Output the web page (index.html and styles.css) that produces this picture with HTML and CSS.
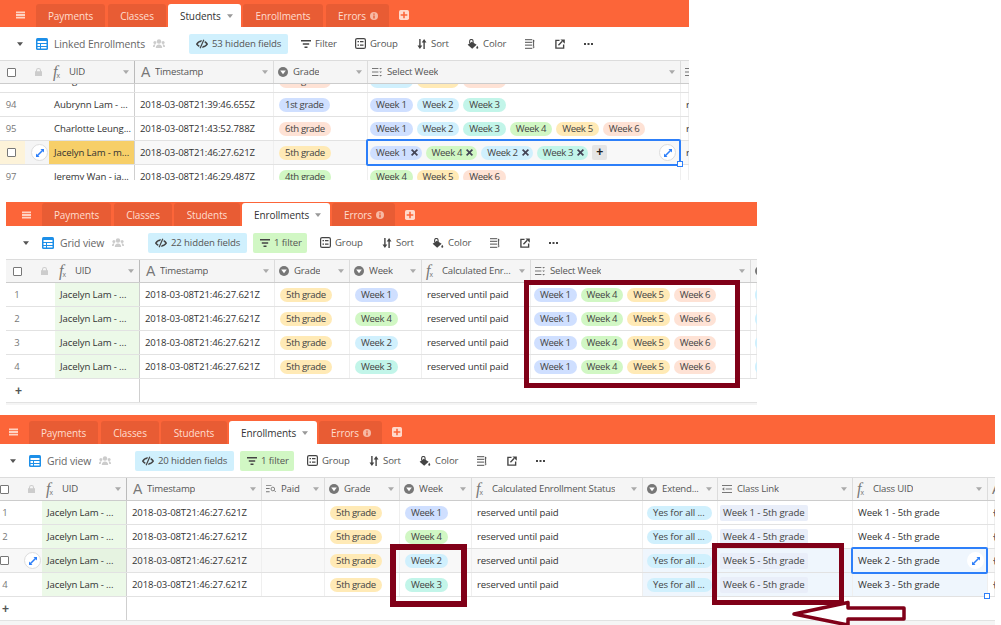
FILE: index.html
```html
<!DOCTYPE html>
<html lang="en">
<head>
<meta charset="utf-8">
<title>Enrollments</title>
<link rel="stylesheet" href="styles.css">
</head>
<body>
<svg class="defs" width="0" height="0">
  <symbol id="i-menu" viewBox="0 0 10 8"><path d="M0 0h10v2H0zM0 3h10v2H0zM0 6h10v2H0z"/></symbol>
  <symbol id="i-caret" viewBox="0 0 8 5"><path d="M0 0h8L4 5z"/></symbol>
  <symbol id="i-grid" viewBox="0 0 12 12"><rect width="12" height="12" rx="1.500" fill="#1d8fe8"/><path d="M1.500 3h9v2h-9zM1.500 6h2.500v2H1.500zM5 6h5.500v2H5zM1.500 9h2.500v1.500H1.500zM5 9h5.500v1.500H5z" fill="#fff"/></symbol>
  <symbol id="i-people" viewBox="0 0 12 9"><circle cx="6" cy="2.500" r="2.200"/><circle cx="1.900" cy="3.400" r="1.500"/><circle cx="10.100" cy="3.400" r="1.500"/><path d="M2.800 9c0-2.400 1.200-3.600 3.200-3.600S9.200 6.600 9.200 9zM0 8c0-1.600.6-2.700 2-2.700l.6.2C1.900 6.300 1.800 7 1.800 8zM12 8c0-1.600-.6-2.700-2-2.700l-.6.2c.7.800.8 1.500.8 2.500z"/></symbol>
  <symbol id="i-eye" viewBox="0 0 13 10"><path d="M.8 5.200C2 3 3.800 1.800 6.500 1.800s4.500 1.200 5.700 3.400c-1.200 2-3 3-5.700 3S2 7.200.8 5.200z" fill="none" stroke="currentColor" stroke-width="1.500"/><path d="M8.500.5 4.500 9.500" stroke="#d0f0fd" stroke-width="3.200"/><path d="M8.500.5 4.500 9.500" stroke="currentColor" stroke-width="1.300"/></symbol>
  <symbol id="i-filter" viewBox="0 0 10 8"><path d="M0 0h10v1.600H0zM1.800 3.200h6.400v1.600H1.800zM3.500 6.400h3V8h-3z"/></symbol>
  <symbol id="i-group" viewBox="0 0 11 11"><rect x=".6" y=".6" width="9.800" height="9.800" rx="1.500" fill="none" stroke="currentColor" stroke-width="1.200"/><path d="M2.500 3h1.500v1.200H2.500zM5 3h3.500v1.200H5zM2.500 6.500h1.500v1.200H2.500zM5 6.500h3.500v1.200H5z"/></symbol>
  <symbol id="i-sort" viewBox="0 0 10 10"><path d="M2.200 0h1.400v6.500h1.700L2.900 10 .5 6.500h1.700zM6.400 10h1.400V3.500h1.700L7.100 0 4.700 3.500h1.700z"/></symbol>
  <symbol id="i-bucket" viewBox="0 0 13 11"><path d="M5.200 3 10.500 6.400 5.600 10.600.6 6.400z"/><path d="M2.800 4.800V2.400a1.900 1.900 0 0 1 3.800 0v2" fill="none" stroke="currentColor" stroke-width="1.200"/><path d="M11.200 7.300c.6 1 1.100 1.600 1.100 2.200a1.100 1.100 0 0 1-2.200 0c0-.6.500-1.200 1.100-2.200z"/></symbol>
  <symbol id="i-height" viewBox="0 0 11 11"><path d="M0 0h8v1.500H0zM0 3h8v1.500H0zM0 6h8v1.500H0zM0 9.500h8V11H0z" opacity=".75"/><path d="M9 2h1v7H9zM8.300 2.500 9.500.5l1.200 2zM8.300 8.500l1.200 2 1.200-2z"/></symbol>
  <symbol id="i-share" viewBox="0 0 11 11"><path d="M5 1.500H1V10h8.500V6" fill="none" stroke="currentColor" stroke-width="1.500"/><path d="M3.800 6.800 8 2.500" stroke="currentColor" stroke-width="1.500"/><path d="M6 .5h4.800v4.800z"/></symbol>
  <symbol id="i-dots" viewBox="0 0 9 2"><path d="M0 0h2v2H0zM3.500 0h2v2h-2zM7 0h2v2H7z"/></symbol>
  <symbol id="i-lock" viewBox="0 0 7 8"><path d="M1 3.200V2.400a2.500 2.400 0 0 1 5 0v.8h1V8H0V3.200zM2 3.200h3V2.400a1.500 1.400 0 0 0-3 0z"/></symbol>
  <symbol id="i-option" viewBox="0 0 10 10"><circle cx="5" cy="5" r="5"/><path d="M2.200 3.400h5.600L5 7.300z" fill="#fff"/></symbol>
  <symbol id="i-multi" viewBox="0 0 11 10"><path d="M0 .5h7v1.200H0zM0 4.400h7v1.200H0zM0 8.300h7v1.200H0zM8 .5h3L9.500 2.200zM8 4.400h3L9.500 6.100zM8 8.300h3L9.500 10z"/></symbol>
  <symbol id="i-link" viewBox="0 0 11 10"><path d="M0 .5h11v1.200H0zM4 4.400h7v1.200H4zM0 8.300h11v1.200H0zM0 5l2.500-1.800v3.600z"/></symbol>
  <symbol id="i-lookup" viewBox="0 0 11 10"><path d="M0 .5h6v1H0zM0 4h4v1H0zM0 7.500h4v1H0z"/><circle cx="7.500" cy="5" r="2" fill="none" stroke="currentColor"/><path d="m9 6.500 1.800 1.800" stroke="currentColor"/></symbol>
  <symbol id="i-expand" viewBox="0 0 8 8"><path d="M4.500 0H8v3.500L6.800 2.300 2.300 6.800 3.500 8H0V4.500l1.200 1.200 4.500-4.500z"/></symbol>
  <symbol id="i-info" viewBox="0 0 8 8"><circle cx="4" cy="4" r="4"/><path d="M3.300 1.500h1.400v1.200H3.300zM3.300 3.400h1.400v3.100H3.300z" fill="#e85c34"/></symbol>
  <symbol id="i-plus" viewBox="0 0 9 9"><rect width="9" height="9" rx="1.500" fill="#ffd9cb"/><path d="M3.800 1.500h1.400v2.300h2.300v1.400H5.200v2.300H3.800V5.200H1.500V3.800h2.300z" fill="#fc6539"/></symbol>
  <symbol id="i-x" viewBox="0 0 7 7"><path d="M1.200 0 3.500 2.300 5.800 0 7 1.200 4.700 3.500 7 5.800 5.800 7 3.500 4.700 1.200 7 0 5.800 2.300 3.500 0 1.200z"/></symbol>
</svg>

<section class="panel p1">
  <nav class="tabbar">
    <svg class="menu"><use href="#i-menu"/></svg>
    <span class="tab w-pay">Payments</span><span class="tab w-cla">Classes</span>
    <span class="tab on w-stu1">Students <svg class="tcaret"><use href="#i-caret"/></svg></span>
    <span class="tab w-enr1">Enrollments</span>
    <span class="tab w-err">Errors <svg class="info"><use href="#i-info"/></svg></span>
    <svg class="addtab"><use href="#i-plus"/></svg>
  </nav>
  <div class="toolbar">
    <svg class="ti-caret"><use href="#i-caret"/></svg>
    <svg class="ti-grid"><use href="#i-grid"/></svg>
    <span class="viewname">Linked Enrollments</span>
    <svg class="ti-people"><use href="#i-people"/></svg>
    <span class="btn hidden"><svg class="ti-eye"><use href="#i-eye"/></svg>53 hidden fields</span>
    <span class="tool t-filter"><svg class="ti-filter"><use href="#i-filter"/></svg>Filter</span>
    <span class="tool t-group"><svg class="ti-group"><use href="#i-group"/></svg>Group</span>
    <span class="tool t-sort"><svg class="ti-sort"><use href="#i-sort"/></svg>Sort</span>
    <span class="tool t-color"><svg class="ti-bucket"><use href="#i-bucket"/></svg>Color</span>
    <svg class="ti-sm t-height"><use href="#i-height"/></svg>
    <svg class="ti-sm t-share"><use href="#i-share"/></svg>
    <svg class="ti-dots t-dots"><use href="#i-dots"/></svg>
  </div>
  <div class="row head">
    <div class="c first"><span class="cb"></span><svg class="lock"><use href="#i-lock"/></svg></div>
    <div class="c frozen"><span class="fx"><i>f</i><sub>x</sub></span><span class="nm">UID</span><svg class="hc"><use href="#i-caret"/></svg></div>
    <div class="c"><span class="ta">A</span><span class="nm">Timestamp</span><svg class="hc"><use href="#i-caret"/></svg></div>
    <div class="c"><svg class="hi"><use href="#i-option"/></svg><span class="nm">Grade</span><svg class="hc"><use href="#i-caret"/></svg></div>
    <div class="c"><svg class="hi"><use href="#i-multi"/></svg><span class="nm">Select Week</span><svg class="hc"><use href="#i-caret"/></svg></div>
    <div class="c"><svg class="hi"><use href="#i-multi"/></svg></div>
  </div>
  <div class="clip">
    <div class="row shift">
      <div class="c first"></div><div class="c frozen">Morgan Lam - ...</div><div class="c">2018-03-08T21:38:12.204Z</div>
      <div class="c"><span class="p salmon">6th grade</span></div>
      <div class="c multi"><span class="p lblue">Week 2</span><span class="p yellow">Week 5</span><span class="p salmon">Week 6</span></div><div class="c"></div>
    </div>
    <div class="row">
      <div class="c first"><span class="n">94</span></div><div class="c frozen">Aubrynn Lam - ...</div><div class="c">2018-03-08T21:39:46.655Z</div>
      <div class="c"><span class="p blue">1st grade</span></div>
      <div class="c multi"><span class="p blue">Week 1</span><span class="p lblue">Week 2</span><span class="p teal">Week 3</span></div><div class="c">r</div>
    </div>
    <div class="row">
      <div class="c first"><span class="n">95</span></div><div class="c frozen">Charlotte Leung...</div><div class="c">2018-03-08T21:43:52.788Z</div>
      <div class="c"><span class="p salmon">6th grade</span></div>
      <div class="c multi"><span class="p blue">Week 1</span><span class="p lblue">Week 2</span><span class="p teal">Week 3</span><span class="p green">Week 4</span><span class="p yellow">Week 5</span><span class="p salmon">Week 6</span></div><div class="c">r</div>
    </div>
    <div class="row hover">
      <div class="c first cream"><span class="cb"></span><span class="circle"><svg><use href="#i-expand"/></svg></span></div><div class="c frozen gold">Jacelyn Lam - m...</div><div class="c">2018-03-08T21:46:27.621Z</div>
      <div class="c"><span class="p yellow">5th grade</span></div>
      <div class="c multi sel">
        <span class="p blue xp">Week 1<svg class="x"><use href="#i-x"/></svg></span><span class="p green xp">Week 4<svg class="x"><use href="#i-x"/></svg></span><span class="p lblue xp">Week 2<svg class="x"><use href="#i-x"/></svg></span><span class="p teal xp">Week 3<svg class="x"><use href="#i-x"/></svg></span><span class="addp">+</span>
        <span class="selbox"></span><span class="handle"></span><span class="circle right"><svg><use href="#i-expand"/></svg></span>
      </div><div class="c">r</div>
    </div>
    <div class="row">
      <div class="c first"><span class="n">97</span></div><div class="c frozen">Jeremy Wan - ia...</div><div class="c">2018-03-08T21:46:29.487Z</div>
      <div class="c"><span class="p green">4th grade</span></div>
      <div class="c multi"><span class="p green">Week 4</span><span class="p yellow">Week 5</span><span class="p salmon">Week 6</span></div><div class="c"></div>
    </div>
  </div>
</section>

<section class="panel p2">
  <nav class="tabbar">
    <svg class="menu"><use href="#i-menu"/></svg>
    <span class="tab w-pay">Payments</span><span class="tab w-cla">Classes</span><span class="tab w-stu">Students</span>
    <span class="tab on w-enr">Enrollments <svg class="tcaret"><use href="#i-caret"/></svg></span>
    <span class="tab w-err">Errors <svg class="info"><use href="#i-info"/></svg></span>
    <svg class="addtab"><use href="#i-plus"/></svg>
  </nav>
  <div class="toolbar">
    <svg class="ti-caret"><use href="#i-caret"/></svg>
    <svg class="ti-grid"><use href="#i-grid"/></svg>
    <span class="viewname">Grid view</span>
    <svg class="ti-people"><use href="#i-people"/></svg>
    <span class="btn hidden"><svg class="ti-eye"><use href="#i-eye"/></svg>22 hidden fields</span>
    <span class="btn filt"><svg class="ti-filter"><use href="#i-filter"/></svg>1 filter</span>
    <span class="tool t-group"><svg class="ti-group"><use href="#i-group"/></svg>Group</span>
    <span class="tool t-sort"><svg class="ti-sort"><use href="#i-sort"/></svg>Sort</span>
    <span class="tool t-color"><svg class="ti-bucket"><use href="#i-bucket"/></svg>Color</span>
    <svg class="ti-sm t-height"><use href="#i-height"/></svg>
    <svg class="ti-sm t-share"><use href="#i-share"/></svg>
    <svg class="ti-dots t-dots"><use href="#i-dots"/></svg>
  </div>
  <div class="row head">
    <div class="c first"><span class="cb"></span><svg class="lock"><use href="#i-lock"/></svg></div>
    <div class="c frozen"><span class="fx"><i>f</i><sub>x</sub></span><span class="nm">UID</span><svg class="hc"><use href="#i-caret"/></svg></div>
    <div class="c"><span class="ta">A</span><span class="nm">Timestamp</span><svg class="hc"><use href="#i-caret"/></svg></div>
    <div class="c"><svg class="hi"><use href="#i-option"/></svg><span class="nm">Grade</span><svg class="hc"><use href="#i-caret"/></svg></div>
    <div class="c"><svg class="hi"><use href="#i-option"/></svg><span class="nm">Week</span><svg class="hc"><use href="#i-caret"/></svg></div>
    <div class="c"><span class="fx"><i>f</i><sub>x</sub></span><span class="nm">Calculated Enr...</span><svg class="hc"><use href="#i-caret"/></svg></div>
    <div class="c"><svg class="hi"><use href="#i-multi"/></svg><span class="nm">Select Week</span><svg class="hc"><use href="#i-caret"/></svg></div>
    <div class="c"><svg class="hi"><use href="#i-option"/></svg></div>
  </div>
  <div class="row">
    <div class="c first"><span class="n">1</span></div><div class="c frozen mint">Jacelyn Lam - ...</div><div class="c">2018-03-08T21:46:27.621Z</div>
    <div class="c"><span class="p yellow">5th grade</span></div><div class="c"><span class="p blue">Week 1</span></div><div class="c">reserved until paid</div>
    <div class="c multi"><span class="p blue">Week 1</span><span class="p green">Week 4</span><span class="p yellow">Week 5</span><span class="p salmon">Week 6</span></div><div class="c tight"><span class="p lblue edge"></span></div>
  </div>
  <div class="row">
    <div class="c first"><span class="n">2</span></div><div class="c frozen mint">Jacelyn Lam - ...</div><div class="c">2018-03-08T21:46:27.621Z</div>
    <div class="c"><span class="p yellow">5th grade</span></div><div class="c"><span class="p green">Week 4</span></div><div class="c">reserved until paid</div>
    <div class="c multi"><span class="p blue">Week 1</span><span class="p green">Week 4</span><span class="p yellow">Week 5</span><span class="p salmon">Week 6</span></div><div class="c tight"><span class="p lblue edge"></span></div>
  </div>
  <div class="row">
    <div class="c first"><span class="n">3</span></div><div class="c frozen mint">Jacelyn Lam - ...</div><div class="c">2018-03-08T21:46:27.621Z</div>
    <div class="c"><span class="p yellow">5th grade</span></div><div class="c"><span class="p lblue">Week 2</span></div><div class="c">reserved until paid</div>
    <div class="c multi"><span class="p blue">Week 1</span><span class="p green">Week 4</span><span class="p yellow">Week 5</span><span class="p salmon">Week 6</span></div><div class="c tight"><span class="p lblue edge"></span></div>
  </div>
  <div class="row">
    <div class="c first"><span class="n">4</span></div><div class="c frozen mint">Jacelyn Lam - ...</div><div class="c">2018-03-08T21:46:27.621Z</div>
    <div class="c"><span class="p yellow">5th grade</span></div><div class="c"><span class="p teal">Week 3</span></div><div class="c">reserved until paid</div>
    <div class="c multi"><span class="p blue">Week 1</span><span class="p green">Week 4</span><span class="p yellow">Week 5</span><span class="p salmon">Week 6</span></div><div class="c tight"><span class="p lblue edge"></span></div>
  </div>
  <div class="addrow"><span class="plus">+</span></div>
  <div class="foot"></div>
  <div class="redbox r1"></div>
</section>

<section class="panel p3">
  <nav class="tabbar">
    <svg class="menu"><use href="#i-menu"/></svg>
    <span class="tab w-pay">Payments</span><span class="tab w-cla">Classes</span><span class="tab w-stu">Students</span>
    <span class="tab on w-enr">Enrollments <svg class="tcaret"><use href="#i-caret"/></svg></span>
    <span class="tab w-err">Errors <svg class="info"><use href="#i-info"/></svg></span>
    <svg class="addtab"><use href="#i-plus"/></svg>
  </nav>
  <div class="toolbar">
    <svg class="ti-caret"><use href="#i-caret"/></svg>
    <svg class="ti-grid"><use href="#i-grid"/></svg>
    <span class="viewname">Grid view</span>
    <svg class="ti-people"><use href="#i-people"/></svg>
    <span class="btn hidden"><svg class="ti-eye"><use href="#i-eye"/></svg>20 hidden fields</span>
    <span class="btn filt"><svg class="ti-filter"><use href="#i-filter"/></svg>1 filter</span>
    <span class="tool t-group"><svg class="ti-group"><use href="#i-group"/></svg>Group</span>
    <span class="tool t-sort"><svg class="ti-sort"><use href="#i-sort"/></svg>Sort</span>
    <span class="tool t-color"><svg class="ti-bucket"><use href="#i-bucket"/></svg>Color</span>
    <svg class="ti-sm t-height"><use href="#i-height"/></svg>
    <svg class="ti-sm t-share"><use href="#i-share"/></svg>
    <svg class="ti-dots t-dots"><use href="#i-dots"/></svg>
  </div>
  <div class="row head">
    <div class="c first"><span class="cb"></span><svg class="lock"><use href="#i-lock"/></svg></div>
    <div class="c frozen"><span class="fx"><i>f</i><sub>x</sub></span><span class="nm">UID</span><svg class="hc"><use href="#i-caret"/></svg></div>
    <div class="c"><span class="ta">A</span><span class="nm">Timestamp</span><svg class="hc"><use href="#i-caret"/></svg></div>
    <div class="c"><svg class="hi"><use href="#i-lookup"/></svg><span class="nm">Paid</span><svg class="hc"><use href="#i-caret"/></svg></div>
    <div class="c"><svg class="hi"><use href="#i-option"/></svg><span class="nm">Grade</span><svg class="hc"><use href="#i-caret"/></svg></div>
    <div class="c"><svg class="hi"><use href="#i-option"/></svg><span class="nm">Week</span><svg class="hc"><use href="#i-caret"/></svg></div>
    <div class="c"><span class="fx"><i>f</i><sub>x</sub></span><span class="nm">Calculated Enrollment Status</span><svg class="hc"><use href="#i-caret"/></svg></div>
    <div class="c"><svg class="hi"><use href="#i-option"/></svg><span class="nm">Extend...</span><svg class="hc"><use href="#i-caret"/></svg></div>
    <div class="c"><svg class="hi"><use href="#i-link"/></svg><span class="nm">Class Link</span><svg class="hc"><use href="#i-caret"/></svg></div>
    <div class="c"><span class="fx"><i>f</i><sub>x</sub></span><span class="nm">Class UID</span><svg class="hc"><use href="#i-caret"/></svg></div>
    <div class="c"><span class="ta">A</span></div>
  </div>
  <div class="row">
    <div class="c first"><span class="n">1</span></div><div class="c frozen mint">Jacelyn Lam - ...</div><div class="c">2018-03-08T21:46:27.621Z</div><div class="c"></div>
    <div class="c"><span class="p yellow">5th grade</span></div><div class="c"><span class="p blue">Week 1</span></div><div class="c">reserved until paid</div>
    <div class="c tight"><span class="p lblue yes">Yes for all ...</span></div><div class="c rc"><span class="rec">Week 1 - 5th grade</span></div><div class="c">Week 1 - 5th grade</div><div class="c">{</div>
  </div>
  <div class="row">
    <div class="c first"><span class="n">2</span></div><div class="c frozen mint">Jacelyn Lam - ...</div><div class="c">2018-03-08T21:46:27.621Z</div><div class="c"></div>
    <div class="c"><span class="p yellow">5th grade</span></div><div class="c"><span class="p green">Week 4</span></div><div class="c">reserved until paid</div>
    <div class="c tight"><span class="p lblue yes">Yes for all ...</span></div><div class="c rc"><span class="rec">Week 4 - 5th grade</span></div><div class="c">Week 4 - 5th grade</div><div class="c">{</div>
  </div>
  <div class="row hover">
    <div class="c first"><span class="cb"></span><span class="circle"><svg><use href="#i-expand"/></svg></span></div><div class="c frozen mintd">Jacelyn Lam - ...</div><div class="c">2018-03-08T21:46:27.621Z</div><div class="c"></div>
    <div class="c"><span class="p yellow">5th grade</span></div><div class="c"><span class="p lblue">Week 2</span></div><div class="c">reserved until paid</div>
    <div class="c tight range"><span class="p lblue yes">Yes for all ...</span></div><div class="c rc range"><span class="rec">Week 5 - 5th grade</span></div>
    <div class="c sel range">Week 2 - 5th grade<span class="selbox"></span><span class="circle right"><svg><use href="#i-expand"/></svg></span></div><div class="c">{</div>
  </div>
  <div class="row">
    <div class="c first"><span class="n">4</span></div><div class="c frozen mint">Jacelyn Lam - ...</div><div class="c">2018-03-08T21:46:27.621Z</div><div class="c"></div>
    <div class="c"><span class="p yellow">5th grade</span></div><div class="c"><span class="p teal">Week 3</span></div><div class="c">reserved until paid</div>
    <div class="c tight range"><span class="p lblue yes">Yes for all ...</span></div><div class="c rc range"><span class="rec">Week 6 - 5th grade</span></div>
    <div class="c sel range">Week 3 - 5th grade<span class="handle"></span></div><div class="c">{</div>
  </div>
  <div class="addrow"><span class="plus">+</span></div>
  <div class="foot"></div>
  <div class="redbox r2"></div>
  <div class="redbox r3"></div>
  <svg class="arrow" viewBox="0 0 120 26"><path d="M4 13 58 1.500V7h56v11H58v6z"/></svg>
</section>
</body>
</html>
```
FILE: styles.css
```css
* { box-sizing: border-box; }
html, body { margin: 0; padding: 0; background: #fff; height: 625px; overflow: hidden; }
body { font: 9.6px/14px "Open Sans", "Noto Sans", sans-serif; letter-spacing: -.12px; color: #333; }
.defs { position: absolute; }
svg { fill: currentColor; display: block; flex: none; }

.panel { position: relative; overflow: hidden; }
.p1 { width: 689px; height: 180px; }
.p2 { width: 751px; height: 203px; margin: 22px 0 0 6px; }
.p3 { width: 995px; height: 210px; margin-top: 10px; }

/* tab bar */
.tabbar { display: flex; align-items: flex-end; height: 27px; background: #fc6539; padding-left: 16px; }
.p2 .tabbar { height: 24px; }
.p3 .tabbar { height: 29px; padding-left: 9px; }
.menu { width: 9px; height: 8px; color: #ffd3c3; margin: 0 11px 8px 0; }
.p2 .menu { margin-bottom: 7px; }
.tab { height: 23px; display: flex; align-items: center; justify-content: center; margin-right: 2px; background: #e85c34; color: #ffdccf; font-size: 10px; letter-spacing: -.1px; border-radius: 3px 3px 0 0; }
.tab.on { background: #fff; color: #333; justify-content: flex-start; padding-left: 12px; gap: 6px; }
.w-pay { width: 69px; margin-right: 3px; }
.w-cla { width: 58px; }
.w-stu { width: 66px; }
.w-stu1 { width: 73px; }
.w-enr { width: 88px; }
.w-enr1 { width: 80px; margin-right: 3px; }
.w-err { width: 63px; justify-content: flex-start; padding-left: 12px; gap: 4px; }
.tcaret { width: 6px; height: 4px; color: #999; }
.info { width: 8px; height: 8px; color: #f7b9a4; }
.addtab { width: 10px; height: 10px; margin: 0 0 7px 8px; }
.p2 .addtab { margin-bottom: 6px; }

/* toolbar */
.toolbar { display: flex; align-items: center; height: 33px; padding-left: 17px; color: #555; white-space: nowrap; }
.p3 .toolbar { padding-left: 10px; }
.ti-caret { width: 6px; height: 4px; color: #555; margin-right: 13px; }
.ti-grid { width: 12px; height: 12px; margin-right: 6px; }
.viewname { font-size: 10.4px; color: #666; margin-right: 6px; width: 46px; }
.p1 .viewname { width: 93px; }
.ti-people { width: 12px; height: 9px; color: #ccc; margin-right: 24px; }
.btn { display: flex; align-items: center; height: 20px; border-radius: 2px; }
.hidden { width: 99px; background: #d0f0fd; gap: 4px; padding-left: 7px; margin-right: 6px; }
.filt { width: 54px; background: #d1f7c4; gap: 4px; padding-left: 7px; margin-right: 13px; }
.ti-eye { width: 12px; height: 10px; color: #444; }
.ti-filter { width: 10px; height: 8px; color: #444; }
.tool { display: flex; align-items: center; gap: 4px; }
.t-filter { width: 36px; margin: 0 18px 0 7px; }
.t-group { width: 42px; margin-right: 20px; }
.t-sort { width: 32px; margin-right: 18px; }
.t-color { width: 39px; margin-right: 19px; }
.ti-group { width: 11px; height: 11px; color: #444; }
.ti-sort { width: 10px; height: 10px; color: #444; }
.ti-bucket { width: 12px; height: 10px; color: #444; }
.ti-sm { width: 10px; height: 10px; color: #444; }
.t-height { margin-right: 20px; }
.t-share { margin-right: 19px; }
.ti-dots { width: 9px; height: 2px; color: #444; }

/* grid rows */
.row { display: grid; height: 24px; border-bottom: 1px solid #e2e2e2; }
.p1 .row { grid-template-columns: 49px 86px 139px 94px 313px 8px; }
.p2 .row { grid-template-columns: 49px 85px 135px 75px 72px 109px 220px 6px; }
.p3 .row { grid-template-columns: 42px 85px 135px 63px 75px 72px 171px 75px 135px 135px 7px; }
.c { position: relative; display: flex; align-items: center; gap: 4px; padding-left: 5px; border-right: 1px solid #efefef; white-space: nowrap; min-width: 0; color: #333; }
.first { padding: 0; border-right: 0; }
.frozen { border-right: 1px solid #cfcfcf; }
.multi { padding-left: 3px; }
.p1 .multi { padding-left: 2px; }
.tight { padding-left: 4px; }
.rc { padding-left: 2px; }

.head { background: #f5f5f5; border-top: 1px solid #dcdcdc; border-bottom: 1px solid #ccc; letter-spacing: -.2px; }
.head .c { border-right-color: #dcdcdc; padding-left: 4px; padding-right: 5px; color: #555; overflow: hidden; }
.head .frozen { border-right: 1px solid #bbb; }
.head .first { padding: 0 0 0 7px; gap: 0; }
.p3 .head .first { padding-left: 0; }
.cb { width: 9px; height: 9px; flex: none; border: 1px solid #777; border-radius: 1px; background: #fff; }
.first > .cb { margin-left: 7px; }
.head .first > .cb { margin-left: 0; }
.p3 .first > .cb { margin-left: 0; }
.lock { width: 7px; height: 8px; color: #ccc; margin-left: 19px; }
.fx { font: italic 16px/14px "Liberation Serif", serif; color: #777; display: flex; width: 11px; flex: none; letter-spacing: 0; }
.fx sub { font-size: 7px; line-height: 7px; align-self: flex-end; font-style: normal; font-family: "Liberation Sans", sans-serif; margin-left: -1px; }
.ta { font: 14px/14px "Liberation Sans", sans-serif; color: #777; width: 11px; padding-left: 2px; flex: none; }
.p3 .c:last-child > .ta { padding-left: 0; }
.hi { width: 10px; height: 10px; color: #777; }
.nm { overflow: hidden; color: #555; margin-left: 1px; }
.hc { width: 6px; height: 4px; margin-left: auto; color: #aaa; }
.n { width: 22px; text-align: center; color: #777; font-size: 9.5px; }
.p3 .n { margin-left: -6px; }

/* pills */
.p { display: inline-flex; align-items: center; flex: none; height: 14px; padding: 0 6px; border-radius: 7px; color: #444; letter-spacing: -.35px; }
.blue { background: #cfdfff; }
.lblue { background: #d0f0fd; }
.teal { background: #c2f5e9; }
.green { background: #d1f7c4; }
.yellow { background: #ffeab6; }
.salmon { background: #fee2d5; }
.yes { width: 65px; padding-right: 0; letter-spacing: -.12px; }
.edge { width: 12px; }
.xp { gap: 4px; padding-right: 4px; }
.x { width: 7px; height: 7px; color: #445; }
.rec { display: inline-flex; align-items: center; height: 16px; padding: 0 3px; background: #e9eef9; border-radius: 2px; color: #444; }
.addp { width: 15px; height: 15px; border-radius: 2px; background: #e5e5e5; font: bold 12px/15px "Liberation Sans", sans-serif; text-align: center; color: #222; flex: none; }

/* row states */
.hover { background: #f8f8f8; }
.cream { background: linear-gradient(to right, #fdf3d9 25px, #f5f5f5 25px); }
.gold { background: #f7cf68; }
.mint { background: #ecf9e8; }
.mintd { background: #e6f3e1; }
.range { background: #eff6fd; }
.circle { position: absolute; left: 31px; top: 3px; width: 17px; height: 17px; border-radius: 50%; background: #fff; border: 1px solid #ddd; color: #2d7ff9; display: flex; align-items: center; justify-content: center; }
.p3 .first .circle { left: 24px; }
.circle svg { width: 8px; height: 8px; }
.circle.right { left: auto; right: 4px; z-index: 2; }
.p3 .circle.right { right: 3px; border: 0; }
.selbox { position: absolute; top: -2px; left: -2px; right: -1px; bottom: -2px; border: 2px solid #2d7ff9; border-radius: 2px; z-index: 1; }
.handle { position: absolute; right: -3px; bottom: -3px; width: 6px; height: 6px; background: #fff; border: 1px solid #2d7ff9; z-index: 2; }

.addrow { height: 23px; width: 100%; display: flex; align-items: center; }
.plus { font: bold 12px/14px "Liberation Sans", sans-serif; color: #555; margin-left: 9px; }
.p3 .plus { margin-left: 2px; }
.p2 .addrow { background: linear-gradient(#cfcfcf, #cfcfcf) 133px 0 / 1px 100% no-repeat; }
.p3 .addrow { background: linear-gradient(#cfcfcf, #cfcfcf) 126px 0 / 1px 100% no-repeat; }
.foot { height: 6px; background: #f5f5f5; border-top: 1px solid #e2e2e2; }
.clip { height: 96px; overflow: hidden; }
.shift { margin-top: -15px; }

/* annotations drawn over the screenshot */
.redbox { position: absolute; border: 5px solid #800018; }
.r1 { left: 518px; top: 78px; width: 216px; height: 108px; }
.r2 { left: 390px; top: 129px; width: 77px; height: 63px; border-width: 6px; }
.r3 { left: 712px; top: 128px; width: 132px; height: 62px; }
.arrow { position: absolute; left: 790px; top: 186px; width: 120px; height: 26px; overflow: visible; }
.arrow path { fill: #fff; stroke: #800018; stroke-width: 3.500; stroke-linejoin: round; }
```
